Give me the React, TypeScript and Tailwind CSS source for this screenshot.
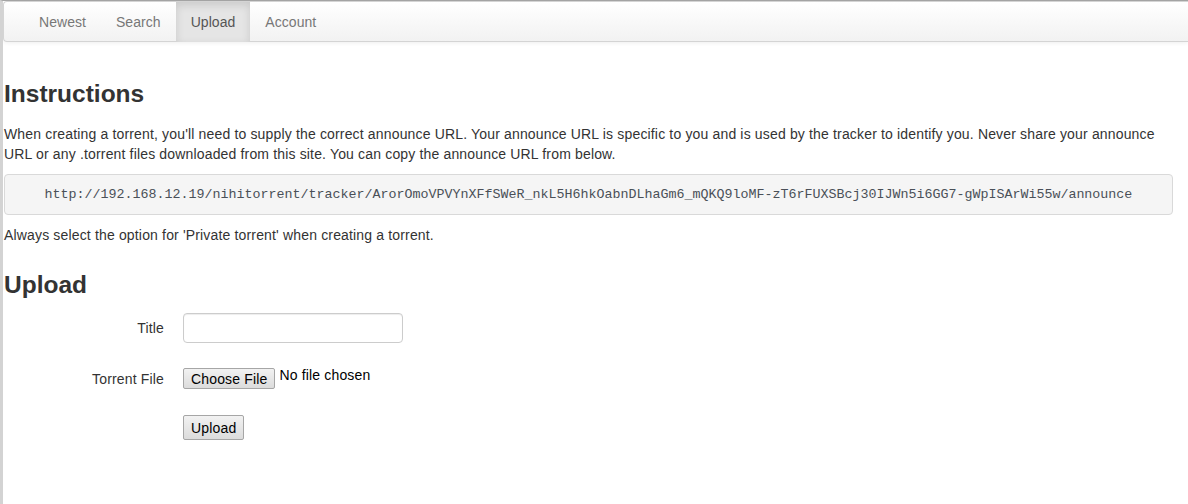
import React from "react";

const sans = { fontFamily: '"Liberation Sans", Arial, Helvetica, sans-serif' };

export default function App() {
  const url =
    "http://192.168.12.19/nihitorrent/tracker/ArorOmoVPVYnXFfSWeR_nkL5H6hkOabnDLhaGm6_mQKQ9loMF-zT6rFUXSBcj30IJWn5i6GG7-gWpISArWi55w/announce";
  return (
    <div
      className="min-h-[504px] w-full overflow-hidden border-l-[3px] border-t border-l-[#d3d3d3] border-t-[#a3a3a3] bg-white text-[14px] leading-[20px] tracking-[0.16px] text-[#333]"
      style={sans}
    >
      {/* navbar */}
      <div className="flex h-[41px] rounded-tl-[4px] rounded-bl-[4px] border border-r-0 border-[#d4d4d4] bg-gradient-to-b from-white to-[#f2f2f2] pl-[20px] tracking-[0.05px] shadow-[0_1px_4px_rgba(0,0,0,0.065)]">
        {["Newest", "Search", "Upload", "Account"].map((t) => (
          <div
            key={t}
            className={
              t === "Upload"
                ? "flex h-[40px] items-center bg-[#e5e5e5] px-[15px] text-[#555] shadow-[inset_0_3px_8px_rgba(0,0,0,0.125)]"
                : "flex h-[40px] items-center px-[15px] text-[#777]"
            }
          >
            {t}
          </div>
        ))}
      </div>

      <div className="ml-px w-[1169px]">
        <h3 className="mt-[32px] mb-[10px] text-[24.5px] font-bold leading-[40px] tracking-normal text-[#333]">
          Instructions
        </h3>
        <p className="mb-[10px]">
          When creating a torrent, you'll need to supply the correct announce URL. Your announce URL is specific to you
          and is used by the tracker to identify you. Never share your announce URL or any .torrent files downloaded
          from this site. You can copy the announce URL from below.
        </p>
        <pre
          className="mb-[10px] rounded-[4px] border border-[#d9d9d9] bg-[#f5f5f5] p-[9.5px] text-center text-[13.333px] leading-[20px] tracking-normal text-[#4a5058]"
          style={{ fontFamily: '"Liberation Mono", "Courier New", monospace' }}
        >
          {url}
        </pre>
        <p className="mb-[10px]">Always select the option for 'Private torrent' when creating a torrent.</p>

        <h3 className="mt-[20px] mb-[8px] text-[24.5px] font-bold leading-[40px] tracking-normal text-[#333]">
          Upload
        </h3>

        <div className="flex flex-col gap-[20px]">
          <div className="flex items-start">
            <label className="w-[160px] pt-[5px] text-right">Title</label>
            <div className="ml-[19px]">
              <div className="h-[30px] w-[220px] rounded-[4px] border border-[#ccc] bg-white shadow-[inset_0_1px_1px_rgba(0,0,0,0.075)]" />
            </div>
          </div>
          <div className="flex h-[30px] items-start pt-px">
            <label className="w-[160px] pt-[5px] text-right">Torrent File</label>
            <div className="ml-[19px] flex items-start">
              <div className="mt-[4px] flex h-[21px] items-center rounded-[2px] border border-[#a6a6a6] bg-gradient-to-b from-[#f2f2f2] to-[#dcdcdc] px-[7px] text-[14px] leading-[16px] text-black">
                Choose File
              </div>
              <span className="ml-[4px] pt-px text-black">No file chosen</span>
            </div>
          </div>
          <div className="flex items-start">
            <div className="w-[160px]" />
            <div className="ml-[19px] mt-[2px] flex h-[25px] items-center rounded-[2px] border border-[#a6a6a6] bg-gradient-to-b from-[#f2f2f2] to-[#dcdcdc] px-[7px] text-[14px] leading-[16px] text-black">
              Upload
            </div>
          </div>
        </div>
      </div>
    </div>
  );
}
